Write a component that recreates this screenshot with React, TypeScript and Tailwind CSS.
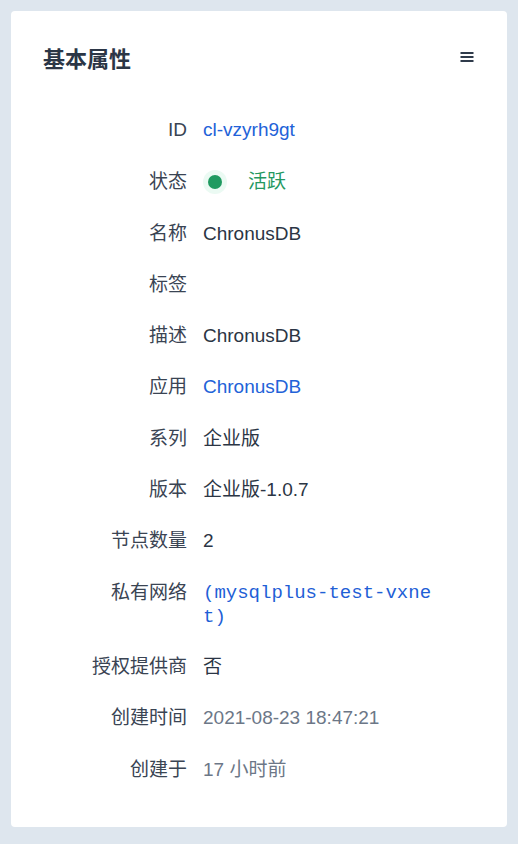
const SANS = 'font-["Liberation_Sans","Noto_Sans_CJK_SC",sans-serif]';

type Row = { label: string; value: string; kind?: 'link' | 'mono' | 'muted' | 'status' };

const ROWS: Row[] = [
  { label: 'ID', value: 'cl-vzyrh9gt', kind: 'link' },
  { label: '状态', value: '活跃', kind: 'status' },
  { label: '名称', value: 'ChronusDB' },
  { label: '标签', value: '' },
  { label: '描述', value: 'ChronusDB' },
  { label: '应用', value: 'ChronusDB', kind: 'link' },
  { label: '系列', value: '企业版' },
  { label: '版本', value: '企业版-1.0.7' },
  { label: '节点数量', value: '2' },
  { label: '私有网络', value: '(mysqlplus-test-vxnet)', kind: 'mono' },
  { label: '授权提供商', value: '否' },
  { label: '创建时间', value: '2021-08-23 18:47:21', kind: 'muted' },
  { label: '创建于', value: '17 小时前', kind: 'muted' },
];

function Value({ row }: { row: Row }) {
  if (row.kind === 'status') {
    return (
      <div className="flex items-center h-[25px]">
        <span className="w-6 h-6 rounded-full bg-[#ebfaf3] flex items-center justify-center">
          <span className="w-[14px] h-[14px] rounded-full bg-[#1f9a60]" />
        </span>
        <span className="ml-[21px] text-[#24985f]">{row.value}</span>
      </div>
    );
  }
  if (row.kind === 'mono') {
    return (
      <div className='pt-[1px] font-["Liberation_Mono","DejaVu_Sans_Mono",monospace] leading-[24px] text-[#1f5fd6] break-all'>
        {row.value}
      </div>
    );
  }
  if (row.kind === 'link') return <span className="text-[#2262d8]">{row.value}</span>;
  if (row.kind === 'muted') return <span className="text-[#6c7787]">{row.value}</span>;
  return <span className="text-[#2b3544]">{row.value}</span>;
}

export default function App() {
  return (
    <div className={`min-h-[844px] bg-[#dee6ee] pt-[11px] pl-[11px] ${SANS}`}>
      <div className="w-[496px] h-[816px] bg-white rounded-[4px] pt-[34px] pl-8 pr-8">
        <div className="flex items-start justify-between">
          <h2 className="text-[22px] leading-[30px] font-bold text-[#2b3646]">基本属性</h2>
          <button className="mt-[6px] mr-[1px] text-[#2f3b4b]">
            <svg width="14" height="12" viewBox="0 0 14 12">
              <rect x="0.5" y="1" width="13" height="2" fill="currentColor" />
              <rect x="0.5" y="5" width="13" height="2" fill="currentColor" />
              <rect x="0.5" y="9" width="13" height="2" fill="currentColor" />
            </svg>
          </button>
        </div>

        <div className="mt-[42px] grid grid-cols-[144px_236px] gap-x-4 gap-y-[26.3px] text-[19px] leading-[25px]">
          {ROWS.map(r => (
            <div key={r.label} className="contents">
              <div className={`text-right text-[#3a4453] ${r.kind === 'status' ? 'pt-[1px]' : ''}`}>{r.label}</div>
              <div className={r.kind === 'mono' ? 'mb-[-1px]' : r.kind === 'status' ? 'min-h-[26px] pt-[1px]' : 'min-h-[25px]'}><Value row={r} /></div>
            </div>
          ))}
        </div>
      </div>
    </div>
  );
}
